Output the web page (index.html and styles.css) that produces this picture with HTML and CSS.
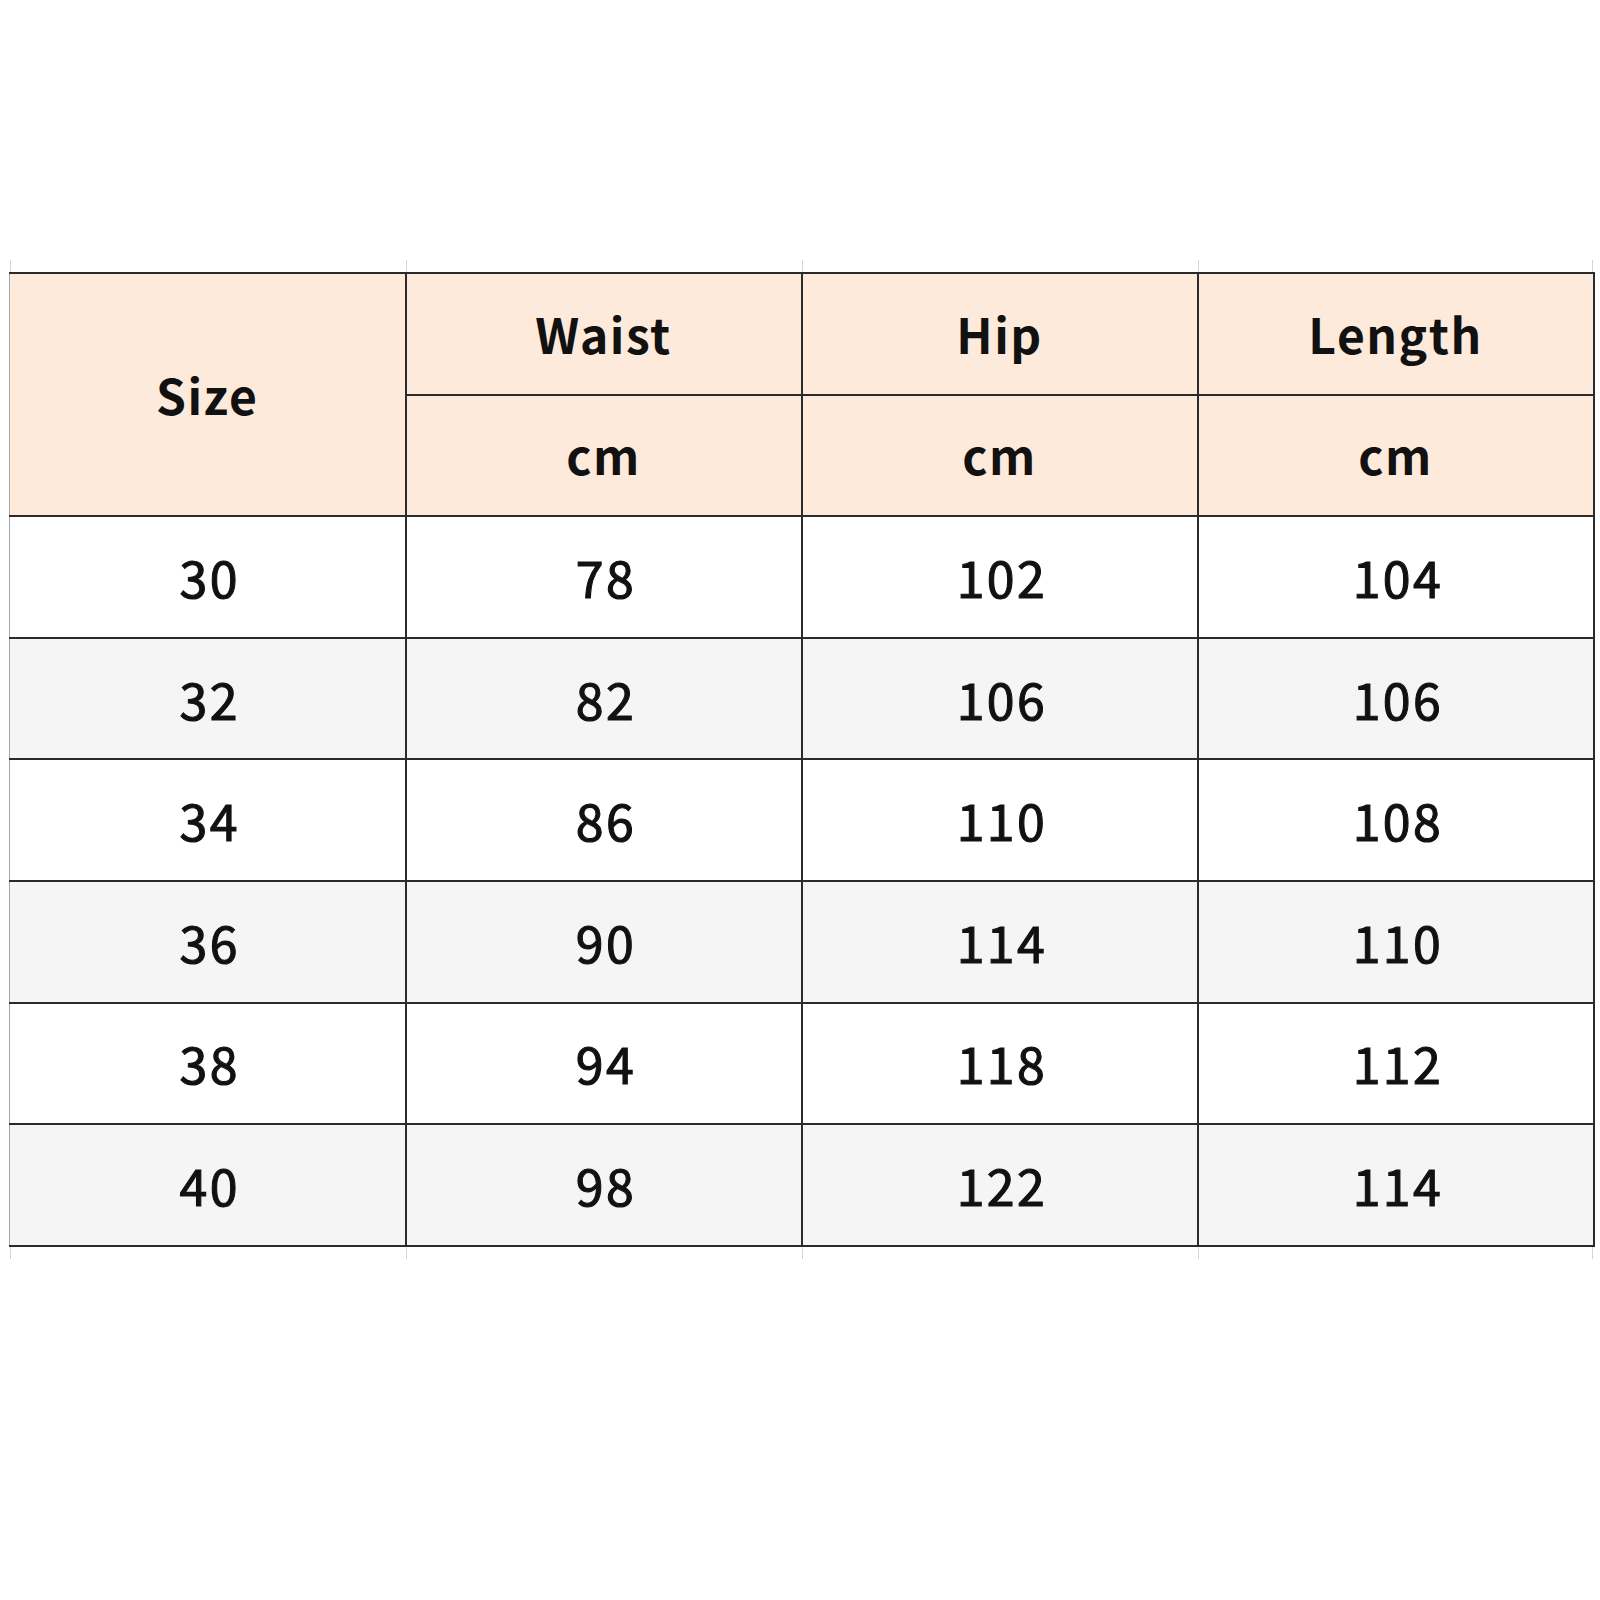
FILE: index.html
```html
<!DOCTYPE html>
<html>
<head>
<meta charset="utf-8">
<link rel="stylesheet" href="styles.css">
</head>
<body>
<div class="sheet">
  <div class="ticks-top">
    <span></span><span></span><span></span><span></span>
  </div>
  <table class="size-table">
    <thead>
      <tr>
        <th rowspan="2" class="first">Size</th>
        <th>Waist</th>
        <th>Hip</th>
        <th>Length</th>
      </tr>
      <tr>
        <th>cm</th>
        <th>cm</th>
        <th>cm</th>
      </tr>
    </thead>
    <tbody>
      <tr><td class="first">30</td><td>78</td><td>102</td><td>104</td></tr>
      <tr class="alt"><td class="first">32</td><td>82</td><td>106</td><td>106</td></tr>
      <tr><td class="first">34</td><td>86</td><td>110</td><td>108</td></tr>
      <tr class="alt"><td class="first">36</td><td>90</td><td>114</td><td>110</td></tr>
      <tr><td class="first">38</td><td>94</td><td>118</td><td>112</td></tr>
      <tr class="alt"><td class="first">40</td><td>98</td><td>122</td><td>114</td></tr>
    </tbody>
  </table>
  <div class="ticks-bottom">
    <span></span><span></span><span></span><span></span>
  </div>
</div>
</body>
</html>
```

FILE: styles.css
```css
html, body {
  margin: 0;
  padding: 0;
  background: #ffffff;
}

body {
  font-family: "Noto Sans CJK SC", "Noto Sans", sans-serif;
  color: #111111;
}

.sheet {
  padding-top: 260px;
  padding-left: 9px;
  width: 1585px;
}

.ticks-top,
.ticks-bottom {
  display: flex;
  height: 12px;
  margin-left: 1px;
}

.ticks-top span,
.ticks-bottom span {
  flex: 0 0 396px;
  border-left: 1px solid #d4d4d4;
  box-sizing: border-box;
}

.ticks-top span:last-child,
.ticks-bottom span:last-child {
  border-right: 1px solid #d4d4d4;
  flex-basis: 395px;
}

.size-table {
  border-collapse: collapse;
  table-layout: fixed;
  width: 1585px;
}

.size-table th,
.size-table td {
  width: 396px;
  height: 121.6px;
  padding: 0;
  text-align: center;
  vertical-align: middle;
  border: 2px solid #2b2b2b;
  box-sizing: border-box;
  line-height: 1;
}

.size-table th.first,
.size-table td.first {
  border-left: 1px solid #a8a8a8;
}

.size-table th {
  background: #fdeadb;
  font-size: 48px;
  font-weight: 700;
  letter-spacing: 1.5px;
  padding-bottom: 2px;
}

.size-table td {
  background: #ffffff;
  font-size: 50px;
  font-weight: 400;
  letter-spacing: 2.5px;
  text-indent: 5px;
  -webkit-text-stroke: 1.1px #111111;
  padding-top: 0;
  padding-bottom: 2px;
}

.size-table tr.alt td {
  background: #f5f5f5;
}
```
